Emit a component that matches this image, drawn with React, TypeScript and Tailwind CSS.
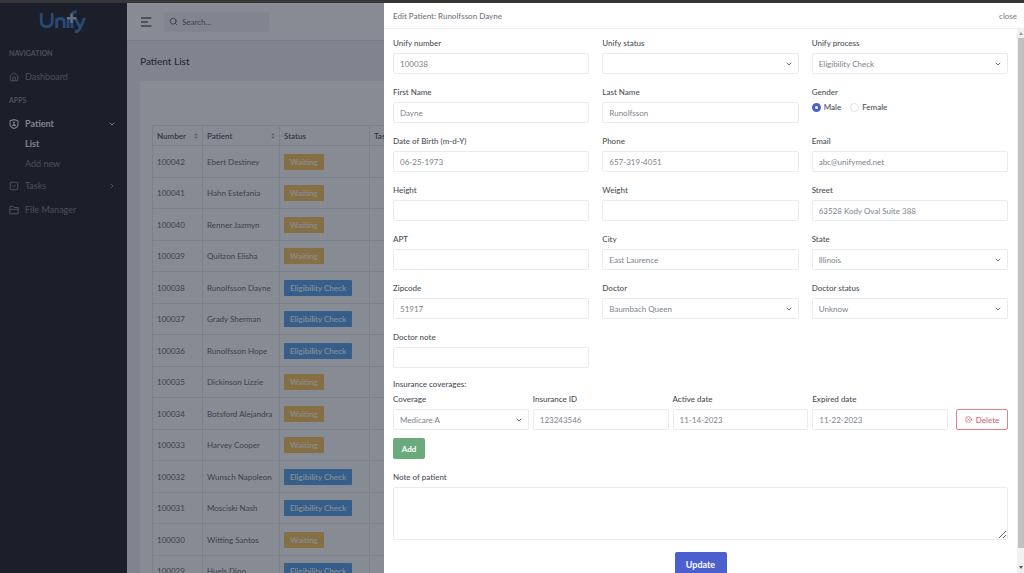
import { useState } from 'react';
import type { ReactNode } from 'react';
import { ChevronDown, ChevronRight, CircleX, House, Search, SquareCheck } from 'lucide-react';

const patients = [
  { number: '100042', name: 'Ebert Destiney', status: 'Waiting' },
  { number: '100041', name: 'Hahn Estefania', status: 'Waiting' },
  { number: '100040', name: 'Renner Jazmyn', status: 'Waiting' },
  { number: '100039', name: 'Quitzon Elisha', status: 'Waiting' },
  { number: '100038', name: 'Runolfsson Dayne', status: 'Eligibility Check' },
  { number: '100037', name: 'Grady Sherman', status: 'Eligibility Check' },
  { number: '100036', name: 'Runolfsson Hope', status: 'Eligibility Check' },
  { number: '100035', name: 'Dickinson Lizzie', status: 'Waiting' },
  { number: '100034', name: 'Botsford Alejandra', status: 'Waiting' },
  { number: '100033', name: 'Harvey Cooper', status: 'Waiting' },
  { number: '100032', name: 'Wunsch Napoleon', status: 'Eligibility Check' },
  { number: '100031', name: 'Mosciski Nash', status: 'Eligibility Check' },
  { number: '100030', name: 'Witting Santos', status: 'Waiting' },
  { number: '100029', name: 'Huels Dino', status: 'Eligibility Check' },
];

const controlClass =
  'block h-[21px] w-full rounded-[2px] border border-[#e9ebee] bg-white px-[6px] text-[8px] text-[#7c838b] outline-none focus:border-[#4c5fce]';

function Logo() {
  return (
    <svg viewBox="0 0 48 24" className="h-6 w-12" fill="none" stroke="#3f7cc0" strokeWidth="2.800" aria-label="Unify">
      <path d="M3.200 3v8.300c0 3.400 2.100 5.400 5.500 5.400s5.500-2 5.500-5.400V3" />
      <path d="M18.700 18V8M18.700 12.200c0-2.400 1.400-3.700 3.700-3.700s3.800 1.300 3.800 3.700V18" />
      <path d="M30 9V18" />
      <path d="M34 18V5.500c0-2.700 1.500-4 4.600-3.400" />
      <path d="M37.200 8l4.700 9.400M46.600 8l-5 11.200c-.9 2-2.300 2.700-4.600 2.100" />
      <path d="M33.500 3.600v9.400M28.800 8.300h9.400" stroke="#b4c4dc" strokeWidth="2.400" />
    </svg>
  );
}

function PatientIcon() {
  return (
    <svg viewBox="0 0 24 24" className="size-[10px]" fill="none" stroke="currentColor" strokeWidth="2.600" strokeLinejoin="round">
      <path d="M12 1.500l9.500 2.500v9.500c0 4-4 7-9.500 9.200C6.500 20.500 2.500 17.500 2.500 13.500V4z" />
      <circle cx="12" cy="9" r="2.600" fill="currentColor" stroke="none" />
      <path d="M6.800 16.500c.5-2.700 2.200-4 5.200-4s4.700 1.300 5.200 4z" fill="currentColor" stroke="none" />
    </svg>
  );
}

function FolderIcon() {
  return (
    <svg viewBox="0 0 24 24" className="size-[10px]" fill="none" stroke="currentColor" strokeWidth="2.400" strokeLinejoin="round">
      <path d="M2 21V3h8l2.500 3H22v15z" />
      <path d="M2 10.500h20" />
    </svg>
  );
}

function SortIcon() {
  return (
    <svg viewBox="0 0 6 8" className="h-[6px] w-1" fill="#8b909a">
      <path d="M3 0l2.500 3h-5zM3 8L.5 5h5z" />
    </svg>
  );
}

function Sidebar() {
  return (
    <aside className="flex w-[127px] shrink-0 flex-col bg-[#27262b] text-[9px] text-[#85878f]">
      <div className="flex h-[38px] items-center justify-center pr-1">
        <Logo />
      </div>
      <p className="mt-[6px] px-[9px] text-[7px] leading-3 font-bold">NAVIGATION</p>
      <a href="#dashboard" className="mt-2 flex h-5 items-center gap-[6px] px-[9px]">
        <House size={10} strokeWidth={2.4} />
        Dashboard
      </a>
      <p className="mt-[7px] px-[9px] text-[7px] leading-3 font-bold">APPS</p>
      <nav className="mt-2">
        <a href="#patient" className="flex h-5 items-center gap-[6px] px-[9px] font-bold text-[#e6e8ee]">
          <PatientIcon />
          Patient
          <ChevronDown size={8} strokeWidth={3} className="mr-[2px] ml-auto" />
        </a>
        <a href="#list" className="flex h-5 items-center pl-[25px] font-bold text-[#e6e8ee]">List</a>
        <a href="#add" className="flex h-5 items-center pl-[25px]">Add new</a>
        <a href="#tasks" className="flex h-6 items-center gap-[6px] px-[9px]">
          <SquareCheck size={10} strokeWidth={2.4} />
          Tasks
          <ChevronRight size={8} strokeWidth={3} className="mr-[2px] ml-auto" />
        </a>
        <a href="#files" className="flex h-6 items-center gap-[6px] px-[9px]">
          <FolderIcon />
          File Manager
        </a>
      </nav>
    </aside>
  );
}

function PatientList() {
  return (
    <main className="flex min-w-0 flex-1 flex-col bg-[#f0f1f7] text-[#666b75]">
      <header className="flex h-[38px] shrink-0 items-center gap-3 border-b border-[#e0e2e8] bg-white px-[14px]">
        <button aria-label="Toggle menu">
          <svg viewBox="0 0 11 10" className="h-[10px] w-[11px]" stroke="currentColor" strokeWidth="1.300">
            <path d="M0 1h10.500M0 5h7M0 9h10.500" />
          </svg>
        </button>
        <label className="flex h-5 w-[105px] items-center gap-1 rounded-[2px] bg-[#f2f3f7] px-[5px]">
          <Search size={9} strokeWidth={2.4} className="shrink-0" />
          <input type="search" aria-label="Search" placeholder="Search..." className="w-full text-[8px] outline-none placeholder:text-[#6c707a]" />
        </label>
      </header>
      <h1 className="px-[13px] pt-[12px] text-[10px] leading-4 font-medium text-[#343a46]">Patient List</h1>
      <section className="mx-[13px] mt-[12px] flex-1 rounded-[3px] bg-white px-[12px] pt-[44px]">
        <table className="w-full table-fixed border-separate border-spacing-0 rounded-tl-[2px] border-t border-l border-[#e6e8ed] text-left text-[8px]">
          <colgroup>
            <col className="w-[50px]" />
            <col className="w-[77px]" />
            <col className="w-[90px]" />
            <col />
          </colgroup>
          <thead className="text-[#52565f]">
            <tr className="h-5 [&>th]:border-r [&>th]:border-b [&>th]:border-[#e6e8ed] [&>th]:px-1 [&>th]:font-semibold">
              <th><span className="flex items-center justify-between">Number <SortIcon /></span></th>
              <th><span className="flex items-center justify-between">Patient <SortIcon /></span></th>
              <th>Status</th>
              <th>Task</th>
            </tr>
          </thead>
          <tbody>
            {patients.map((patient) => (
              <tr key={patient.number} className="odd:h-8 even:h-[31px] [&>td]:border-r [&>td]:border-b [&>td]:border-[#e6e8ed] [&>td]:px-1">
                <td>{patient.number}</td>
                <td className="whitespace-nowrap">{patient.name}</td>
                <td>
                  <span
                    className={`inline-flex h-4 items-center rounded-[1px] px-[6px] align-middle font-semibold whitespace-nowrap text-white ${
                      patient.status === 'Waiting' ? 'bg-[#fdc65c]' : 'bg-[#5aa5ee]'
                    }`}
                  >
                    {patient.status}
                  </span>
                </td>
                <td />
              </tr>
            ))}
          </tbody>
        </table>
      </section>
    </main>
  );
}

function Field({ id, label, children }: { id: string; label: string; children: ReactNode }) {
  return (
    <div className="min-w-0">
      <label htmlFor={id} className="mb-1 block leading-3 font-medium">{label}</label>
      {children}
    </div>
  );
}

function TextField({ id, label, value = '' }: { id: string; label: string; value?: string }) {
  return (
    <Field id={id} label={label}>
      <input id={id} type="text" defaultValue={value} className={controlClass} />
    </Field>
  );
}

function SelectField({ id, label, value = '' }: { id: string; label: string; value?: string }) {
  return (
    <Field id={id} label={label}>
      <div className="relative">
        <select id={id} defaultValue={value} className={`${controlClass} appearance-none`}>
          <option value={value}>{value}</option>
        </select>
        <ChevronDown size={8} strokeWidth={3} className="pointer-events-none absolute top-[7px] right-[6px] text-[#6b7280]" />
      </div>
    </Field>
  );
}

function GenderField() {
  const [gender, setGender] = useState('Male');

  return (
    <fieldset className="min-w-0">
      <legend className="mb-[3px] block leading-3 font-medium">Gender</legend>
      <div className="flex gap-[9px]">
        {['Male', 'Female'].map((option) => (
          <label key={option} className="flex items-center gap-[3px] leading-3 font-medium">
            <input
              type="radio"
              name="gender"
              checked={gender === option}
              onChange={() => setGender(option)}
              className="size-[9px] appearance-none rounded-full border border-[#dfe2e6] bg-white checked:border-[3px] checked:border-[#4c5fce]"
            />
            {option}
          </label>
        ))}
      </div>
    </fieldset>
  );
}

function EditPatient() {
  return (
    <div role="dialog" aria-label="Edit Patient" className="absolute inset-y-0 right-0 flex w-5/8 flex-col bg-white text-[8px] text-[#4b5057]">
      <div className="flex h-[26px] shrink-0 items-center justify-between border-b border-[#eceef1] pr-[7px] pl-[9px] text-[#70767e]">
        <h2 className="font-medium">Edit Patient: Runolfsson Dayne</h2>
        <button>close</button>
      </div>
      <div className="flex min-h-0 flex-1">
        <form className="min-w-0 flex-1 overflow-hidden px-[9px] pt-2">
          <div className="grid grid-cols-3 gap-x-[13px] gap-y-3">
            <TextField id="number" label="Unify number" value="100038" />
            <SelectField id="status" label="Unify status" />
            <SelectField id="process" label="Unify process" value="Eligibility Check" />
            <TextField id="first" label="First Name" value="Dayne" />
            <TextField id="last" label="Last Name" value="Runolfsson" />
            <GenderField />
            <TextField id="birth" label="Date of Birth (m-d-Y)" value="06-25-1973" />
            <TextField id="phone" label="Phone" value="657-319-4051" />
            <TextField id="email" label="Email" value="abc@unifymed.net" />
            <TextField id="height" label="Height" />
            <TextField id="weight" label="Weight" />
            <TextField id="street" label="Street" value="63528 Kody Oval Suite 388" />
            <TextField id="apt" label="APT" />
            <TextField id="city" label="City" value="East Laurence" />
            <SelectField id="state" label="State" value="Illinois" />
            <TextField id="zipcode" label="Zipcode" value="51917" />
            <SelectField id="doctor" label="Doctor" value="Baumbach Queen" />
            <SelectField id="doctor-status" label="Doctor status" value="Unknow" />
            <TextField id="doctor-note" label="Doctor note" />
          </div>

          <p className="mt-[10px] leading-3 font-medium">Insurance coverages:</p>
          <div className="mt-[3px] flex items-end gap-2">
            <div className="grid flex-1 grid-cols-4 gap-1">
              <SelectField id="coverage" label="Coverage" value="Medicare A" />
              <TextField id="insurance" label="Insurance ID" value="123243546" />
              <TextField id="active" label="Active date" value="11-14-2023" />
              <TextField id="expired" label="Expired date" value="11-22-2023" />
            </div>
            <button type="button" className="flex h-[21px] w-[52px] items-center justify-center gap-1 rounded-[2px] border border-[#e2808b] font-medium text-[#d9606f]">
              <CircleX size={7} strokeWidth={2.4} />
              Delete
            </button>
          </div>
          <button type="button" className="mt-2 block h-[21px] w-8 rounded-[2px] bg-[#6aab7d] font-bold text-white">
            Add
          </button>

          <div className="mt-3">
            <Field id="note" label="Note of patient">
              <textarea id="note" className="block h-[53px] w-full resize-y rounded-[2px] border border-[#e9ebee] p-[6px] outline-none" />
            </Field>
          </div>
          <button type="submit" className="mx-auto mt-3 block h-[26px] w-[52px] rounded-[2px] bg-[#4c5fce] text-[9px] font-bold text-white">
            Update
          </button>
        </form>

        {/* scroll track */}
        <div className="flex w-[7px] shrink-0 flex-col items-center bg-[#f1f1f1] text-[#555]">
          <span className="flex h-[9px] items-center"><svg viewBox="0 0 4 3" className="h-[3px] w-1" fill="#999"><path d="M2 0l2 3H0z" /></svg></span>
          <span className="w-[6px] flex-1 bg-[#c1c1c1]" />
          <span className="flex h-[25px] items-end pb-[4px]"><svg viewBox="0 0 4 3" className="h-[3px] w-1" fill="currentColor"><path d="M2 3L0 0h4z" /></svg></span>
        </div>
      </div>
    </div>
  );
}

export default function App() {
  return (
    <div className="h-screen overflow-hidden bg-[#373737] pt-[3px] font-['Lato',sans-serif]">
      <div className="relative flex h-full overflow-hidden">
        <Sidebar />
        <PatientList />
        <div className="absolute inset-0 bg-gray-900/50" />
        <EditPatient />
      </div>
    </div>
  );
}
